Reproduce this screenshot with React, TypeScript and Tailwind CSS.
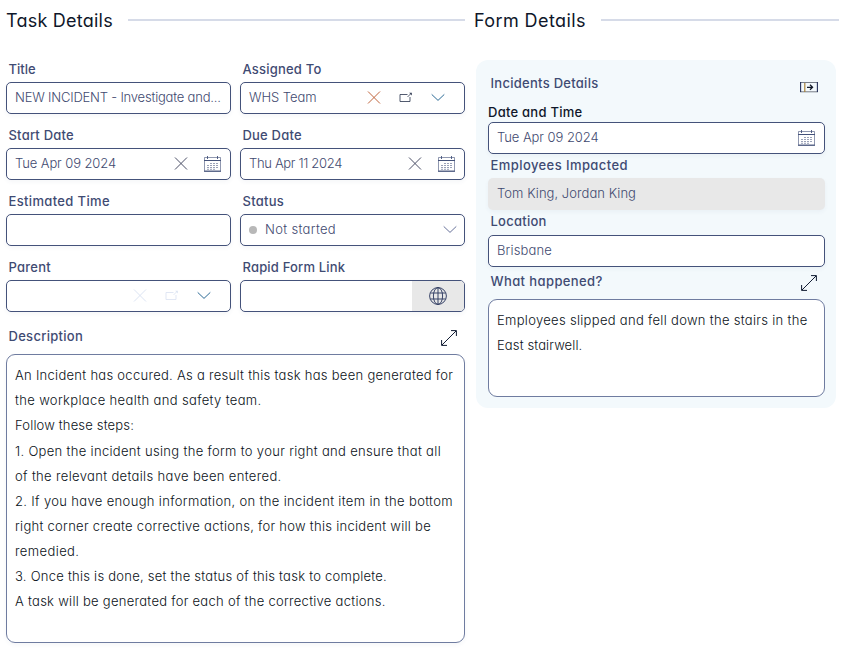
import type { ReactNode } from "react";

const field =
  "flex h-8 items-center rounded-[5px] border border-[#44527a] bg-white shadow-[0_2px_4px_rgba(60,70,110,0.05)]";
const value = "whitespace-pre pl-2 text-[13px] font-light text-[#3f4a70]";

function Cross({ className }: { className: string }) {
  return (
    <svg className={`block h-[14px] w-[14px] shrink-0 ${className}`} viewBox="0 0 14 14" fill="none" stroke="currentColor">
      <path d="M1 .5 13 12.5M13 .5 1 12.5" />
    </svg>
  );
}

function PopOut({ className }: { className: string }) {
  return (
    <svg className={`block h-[14px] w-[14px] shrink-0 ${className}`} viewBox="0 0 14 14" fill="none" stroke="currentColor">
      <path d="M8.5 3.5h-7.5v7h10V6" strokeWidth=".85" />
      <path d="m8.5 6 3.3-3.3" strokeWidth=".8" />
      <path d="M10.2 1.8h2.6v2.6z" fill="currentColor" stroke="none" />
    </svg>
  );
}

function Chevron({ className }: { className: string }) {
  return (
    <svg className={`block h-[14px] w-[14px] shrink-0 ${className}`} viewBox="0 0 14 14" fill="none" stroke="currentColor">
      <path d="m.7 3.4 6.3 6 6.3-6" />
    </svg>
  );
}

function Calendar() {
  return (
    <svg className="block h-4 w-[17px] shrink-0 text-[#44527a]" viewBox="0 0 17 16" fill="none" stroke="currentColor">
      <path d="M.5 1.5h16v13.5H.5z" strokeWidth=".8" opacity=".75" />
      <path d="M0 4.5h17M0 15.3h17" />
      <path d="M3.5 0v3M13.5 0v3" strokeWidth=".9" />
      <path d="M6 7.5h8M3 9.5h11M3 11.5h11M3 13.3h8" strokeDasharray="2 1" strokeWidth=".9" opacity=".6" />
    </svg>
  );
}

function Globe() {
  return (
    <svg className="block h-[18px] w-[18px] text-[#2f3b61]" viewBox="0 0 18 18" fill="none" stroke="currentColor" strokeWidth=".95">
      <circle cx="9" cy="9" r="8.4" />
      <ellipse cx="9" cy="9" rx="4.6" ry="8.4" />
      <path d="M9 .6v16.8M1.4 6h15.2M1.4 12h15.2" />
    </svg>
  );
}

function Expand() {
  return (
    <svg className="block h-4 w-4 shrink-0 text-[#111c33]" viewBox="0 0 16 16" fill="none" stroke="currentColor">
      <path d="M.8 15.2 15.2.8M10 .6h5.4V6M.6 10v5.4H6" />
    </svg>
  );
}

function OpenForm() {
  return (
    <svg className="block h-[11px] w-[18px] shrink-0" viewBox="0 0 18 11" fill="none">
      <path d="M0 .5h18M0 9.8h18" stroke="#777d87" />
      <path d="M.6 0v10M17.4 0v10" stroke="#26315a" strokeWidth="1.1" />
      <path d="M4.8 1v9" stroke="#a88337" strokeWidth="1.2" />
      <path d="M7 5.3h5.5M10 2.8l2.6 2.5L10 7.8" stroke="#111827" strokeWidth="1.2" />
    </svg>
  );
}

function Heading({ children, track }: { children: ReactNode; track: string }) {
  return (
    <div className="flex h-[42px] items-center">
      <h2 className={`whitespace-nowrap text-lg leading-none text-[#0f172a] ${track}`}>{children}</h2>
      <div className="mb-[2px] ml-[15px] h-[2px] flex-1 bg-[#d6dbe8]" />
    </div>
  );
}

function Label({ children, track }: { children: ReactNode; track: string }) {
  return (
    <div className={`whitespace-nowrap pb-[2px] pl-[2.5px] text-[13px] font-medium leading-[22px] text-[#3f4b73] ${track}`}>{children}</div>
  );
}

const steps = [
  { text: "An Incident has occured. As a result this task has been generated for", track: "tracking-[0.285px]" },
  { text: "the workplace health and safety team.", track: "tracking-[0.355px]" },
  { text: "Follow these steps:", track: "tracking-[0.167px]" },
  { text: "1. Open the incident using the form to your right and ensure that all", track: "tracking-[0.322px]" },
  { text: "of the relevant details have been entered.", track: "tracking-[0.345px]" },
  { text: "2. If you have enough information, on the incident item in the bottom", track: "tracking-[0.349px]" },
  { text: "right corner create corrective actions, for how this incident will be", track: "tracking-[0.283px]" },
  { text: "remedied.", track: "tracking-[0.4px]" },
  { text: "3. Once this is done, set the status of this task to complete.", track: "tracking-[0.252px]" },
  { text: "A task will be generated for each of the corrective actions.", track: "tracking-[0.28px]" },
];

export default function App() {
  return (
    <main className="flex h-[653px] w-[848px] gap-[9px] overflow-hidden bg-white pl-[6px] font-['Inter',sans-serif] [font-feature-settings:'cv11']">
      <section className="w-[459px]">
        <Heading track="tracking-[0.23px]">Task Details</Heading>

        <div className="mt-4 grid grid-cols-2 gap-x-[9px] gap-y-[10px]">
          <div>
            <Label track="">Title</Label>
            <div className={field}>
              <span className={`${value} tracking-[-0.2px]`}>NEW INCIDENT - Investigate and...</span>
            </div>
          </div>
          <div>
            <Label track="tracking-[0.202px]">Assigned To</Label>
            <div className={`${field} gap-[18px] pr-[19px]`}>
              <span className={`${value} mr-auto tracking-[-0.06px]`}>WHS Team</span>
              <Cross className="text-[#c0653c]" />
              <PopOut className="text-[#333d55]" />
              <Chevron className="text-[#2c6a96]" />
            </div>
          </div>
          <div>
            <Label track="tracking-[0.22px]">Start Date</Label>
            <div className={`${field} gap-4 pr-[9px]`}>
              <span className={`${value} mr-auto tracking-[-0.102px]`}>Tue Apr 09 2024</span>
              <Cross className="text-[#4a4f66]" />
              <Calendar />
            </div>
          </div>
          <div>
            <Label track="tracking-[0.2px]">Due Date</Label>
            <div className={`${field} gap-4 pr-[9px]`}>
              <span className={`${value} mr-auto tracking-[-0.333px]`}>Thu Apr 11 2024</span>
              <Cross className="text-[#4a4f66]" />
              <Calendar />
            </div>
          </div>
          <div>
            <Label track="tracking-[0.35px]">Estimated Time</Label>
            <div className={field} />
          </div>
          <div>
            <Label track="tracking-[0.25px]">Status</Label>
            <div className={`${field} pr-[7px]`}>
              <span className="ml-2 h-2 w-2 rounded-full bg-[#b8b8b8]" />
              <span className={`${value} mr-auto tracking-[0.324px]`}>Not started</span>
              <Chevron className="text-[#68729a]" />
            </div>
          </div>
          <div>
            <Label track="tracking-[0.25px]">Parent</Label>
            <div className={`${field} justify-end gap-[18px] pr-[19px]`}>
              <Cross className="text-[#dbe3f2]" />
              <PopOut className="text-[#dbe3f2]" />
              <Chevron className="text-[#2c6a96]" />
            </div>
          </div>
          <div>
            <Label track="tracking-[0.18px]">Rapid Form Link</Label>
            <div className={`${field} justify-end overflow-hidden`}>
              <div className="flex h-full w-[52px] items-center justify-center bg-[#e8e8e8]">
                <Globe />
              </div>
            </div>
          </div>
        </div>

        <div className="mt-[13px] flex h-[29px] justify-between pr-2">
          <Label track="tracking-[0.29px]">Description</Label>
          <div className="mt-[5px]">
            <Expand />
          </div>
        </div>
        <div className="h-[289px] rounded-[9px] border border-[#6f7ca0] pl-2 pt-[8.3px] text-[13px] font-light leading-[25.1px] text-[#0b1220] shadow-[0_2px_4px_rgba(60,70,110,0.05)]">
          {steps.map((s) => (
            <p key={s.text} className={`whitespace-nowrap ${s.track}`}>
              {s.text}
            </p>
          ))}
        </div>
      </section>

      <section className="w-[365px]">
        <Heading track="tracking-[0.4px]">Form Details</Heading>

        <div className="ml-[2px] mt-[18px] h-[348px] w-[360px] rounded-xl bg-[#f3f9fc] pl-3 pr-[11px] pt-3">
          <div className="flex h-7 justify-between pr-[7px]">
            <Label track="tracking-[0.275px]">Incidents Details</Label>
            <div className="mt-[10px]">
              <OpenForm />
            </div>
          </div>
          <div className="h-[22px] text-[13px] font-medium leading-[25px] tracking-[0.25px] text-[#0f172a]">Date and Time</div>
          <div className={`${field} pr-[9px]`}>
            <span className={`${value} mr-auto tracking-[-0.06px]`}>Tue Apr 09 2024</span>
            <Calendar />
          </div>
          <Label track="tracking-[0.42px]">Employees Impacted</Label>
          <div className="flex h-8 items-center rounded-[5px] bg-[#e8e8e8] shadow-[0_2px_4px_rgba(60,70,110,0.05)]">
            <span className={`${value} pl-[9px] tracking-[0.046px]`}>Tom King, Jordan King</span>
          </div>
          <div className="h-[25px]">
            <Label track="tracking-[0.25px]">Location</Label>
          </div>
          <div className={field}>
            <span className={`${value} tracking-[0.146px]`}>Brisbane</span>
          </div>
          <div className="flex h-8 justify-between pr-2 pt-[3px]">
            <Label track="tracking-[0.4px]">What happened?</Label>
            <div className="mt-[5px]">
              <Expand />
            </div>
          </div>
          <div className="h-[98px] rounded-[9px] border border-[#6f7ca0] bg-white pl-2 pt-[8.3px] text-[13px] font-light leading-[25.1px] text-[#0b1220]">
            <p className="whitespace-nowrap tracking-[0.31px]">Employees slipped and fell down the stairs in the</p>
            <p className="tracking-[0.12px]">East stairwell.</p>
          </div>
        </div>
      </section>
    </main>
  );
}
